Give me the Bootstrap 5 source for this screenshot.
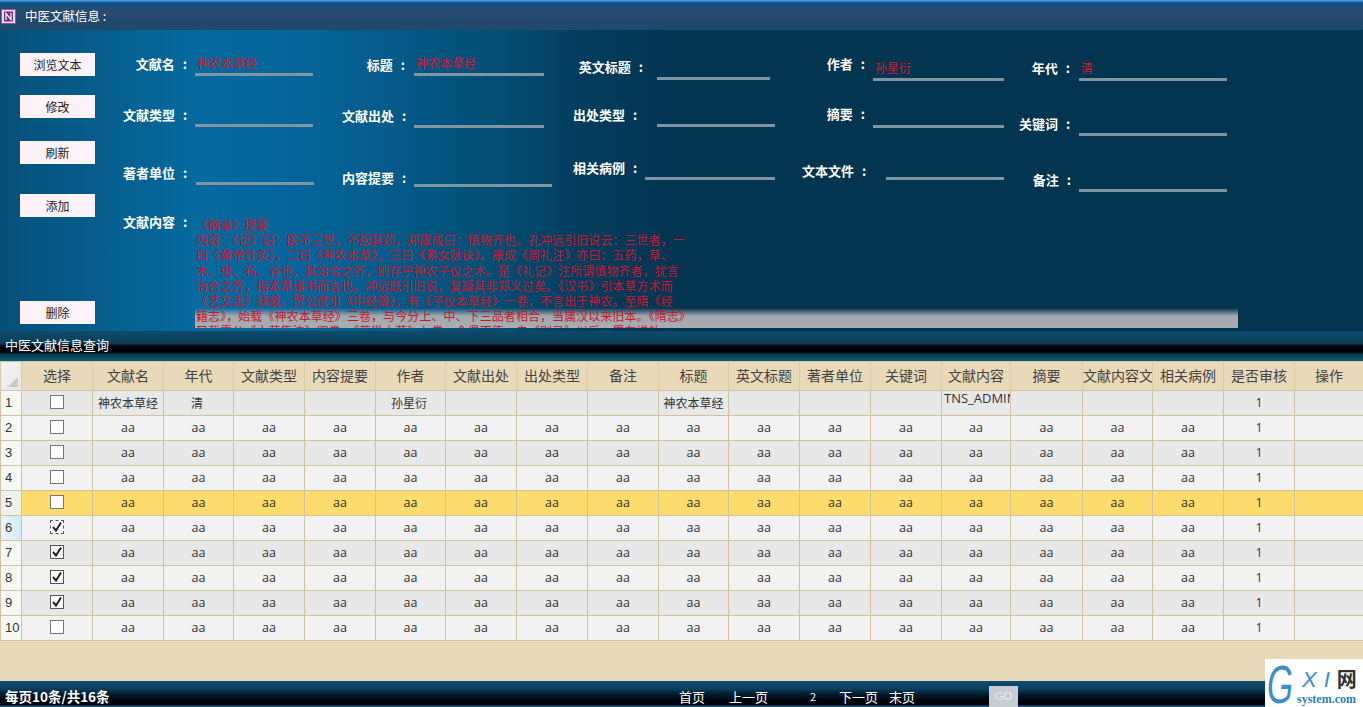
<!DOCTYPE html>
<html lang="zh">
<head>
<meta charset="utf-8">
<title>中医文献信息</title>
<link href="https://cdn.jsdelivr.net/npm/bootstrap@5.3.0/dist/css/bootstrap.min.css" rel="stylesheet">
<style>
html,body{height:707px;overflow:hidden}
body{font-family:"Noto Sans CJK SC","Liberation Sans",sans-serif;font-size:12px;background:#e8dab8;position:relative}
.page{width:1363px;height:707px}
.title-bar{height:30px;padding-top:3px;background:linear-gradient(180deg,#4a9ad8 0,#4a9ad8 1px,#0b5fa5 2px,#14507c 4px,#2a4a70 12px,#21486c 22px,#1f4a6c 30px);color:#fff;font-size:12.5px}
.app-ico{width:15px;height:15px;margin:-1px 9px 0 1px;flex:none}
.form-area{height:301px;overflow:hidden;background:linear-gradient(90deg,#07507a 0,#056a9f 200px,#05659a 300px,#045078 480px,#033c5c 590px,#033450 680px,#033450 100%)}
.btn-col{width:103px;margin-left:20px;padding-top:23px;flex:none}
.act-btn{display:block;width:75px;height:23px;padding:0;border:0;border-radius:0;background:#fdf2f7;color:#222;font-size:12px;line-height:23px}
.mt-a{margin-top:19px}.mt-b{margin-top:23px}.mt-c{margin-top:30px}.mt-d{margin-top:84px}
.fld-col{flex:none;padding-top:20px}
.c1{width:219px}.c2{width:231px}.c3{width:229px}.c4{width:217px}.c5{width:120px}
.fld{display:flex;height:var(--h)}
.fl{flex:none;width:var(--lw);padding-top:var(--lt);line-height:18px;height:27px;text-align:right;white-space:nowrap;color:#fff;font-weight:700;font-size:13px;word-spacing:5px}
.fi{flex:none;margin-left:var(--ig);width:var(--iw);height:var(--ih);border-bottom:3px solid #7e95a3;color:#d5182c;display:flex;align-items:flex-end;padding:0 0 3px 2px;line-height:14px;font-size:12px}
.c1 .fl{--lw:64px}.c1 .fi{--ig:8px;--iw:118px}
.c2 .fl{--lw:63px}.c2 .fi{--ig:9px;--iw:130px}
.c4 .fl{--lw:61px}.c4 .fi{--ig:10px;--iw:131px}
.c5 .fl{--lw:49px}.c5 .fi{--ig:11px;--iw:148px}
.r1{--h:50px}.r2{--h:55px}.r2b{--h:60px}
.a1 .fl{--lt:5px}.a1 .fi{--ih:26px}
.a2 .fl{--lt:6px}.a2 .fi{--ih:27px}
.a3 .fl{--lt:9px}.a3 .fi{--ih:30px;--ig:9px}
.a4 .fl{--lt:3px}
.b1 .fl{--lt:6px}.b1 .fi{--ih:26px}
.b2 .fl{--lt:7px}.b2 .fi{--ih:28px}
.b3 .fl{--lt:9px}.b3 .fi{--ih:27px;--iw:138px}
.d1 .fl{--lw:70px;--lt:8px}.d1 .fi{--ig:14px;--iw:113px;--ih:30px}
.d2 .fl{--lw:63px;--lt:6px}.d2 .fi{--ig:21px;--iw:118px;--ih:27px}
.d3 .fl{--lw:63px;--lt:4px}.d3 .fi{--ig:9px;--iw:130px;--ih:25px}
.e1 .fl{--lt:5px;--lw:63px}.e1 .fi{--ih:31px;--ig:8px}
.e2 .fl{--lt:5px;--lw:63px}.e2 .fi{--ih:28px;--ig:8px}
.e3 .fl{--lt:7px}.e3 .fi{--ih:25px;--ig:23px;--iw:118px}
.g1 .fl{--lt:9px;--lw:51px}.g1 .fi{--ih:31px;--ig:9px}
.g2 .fl{--lt:15px}.g2 .fi{--ih:36px}
.g3 .fl{--lt:16px;--lw:52px}.g3 .fi{--ih:37px;--ig:8px}
.memo{flex:none;margin:7px 0 0 8px;width:1043px;height:111px;overflow:hidden;color:#c8182e;font-size:12px;line-height:15.2px;letter-spacing:.07px;white-space:pre;padding-left:1px;background:linear-gradient(180deg,rgba(170,174,178,0) 0,rgba(170,174,178,.95) 8px,#a9adb0 100%) left bottom/100% 20px no-repeat}
.query-bar{height:30px;color:#fff;font-size:13px;line-height:28px;padding-left:5px;background:linear-gradient(180deg,#0d4a6a 0,#0a3e5a 12px,#082f48 13px,#00050e 15px,#000 21px,#0a3a50 23px,#0a5a70 29px,#0a5a70 30px)}
.grid-area{height:320px;background:#e8dab8}
.data-grid{table-layout:fixed;width:1363px;margin:0;--bs-table-border-color:#cfc3a3;--bs-table-bg:transparent;font-size:12.5px;color:#333;font-family:"Open Sans","Noto Sans CJK SC",sans-serif}
.data-grid>:not(caption)>*>*{padding:0;height:25px;line-height:22px;text-align:center;vertical-align:middle;overflow:hidden;white-space:nowrap;border-color:#cfc3a3}
.data-grid thead th{height:29px;padding-bottom:3px;background:#e8dab8;font-weight:400;font-size:14px;color:#444;font-family:"Noto Sans CJK SC",sans-serif;border-color:#e4d6b2 #d8cba8}
.data-grid .corner{background:linear-gradient(135deg,#f4f4f4,#e6e6e6);position:relative}
.corner svg{position:absolute;right:3px;bottom:3px}
.data-grid th.rh{background:#f6f8f2;font-weight:400;text-align:left;padding-left:4px;font-size:13px;color:#333;font-family:"Liberation Sans",sans-serif}
.data-grid tr.sel-row th.rh{background:linear-gradient(90deg,#e9f5fb,#d3ebf8)}
.data-grid tr.alt>td{background:#e8e8e8}
.data-grid tr.pln>td{background:#f2f2f2}
.data-grid tr.hot>td{background:#fddc6e}
.data-grid tr.hot>th.rh{background:#eef2ea}
.data-grid td.tl{text-align:left;padding-left:2px;line-height:14px;vertical-align:top;font-size:13px}
.cjk{font-family:"Noto Sans CJK SC",sans-serif;font-size:12px}
.nudge{margin-right:3px}
.chk.form-check-input{width:14px;height:14px;margin:-4px 0 0;border:1px solid #777;border-radius:0;background-color:#fff;display:inline-block;vertical-align:middle}
.chk.form-check-input:checked{background-color:#fff;border-color:#555;background-size:14px;background-image:url("data:image/svg+xml,%3Csvg xmlns='http://www.w3.org/2000/svg' viewBox='0 0 14 14'%3E%3Cpath d='M3 7l3 3.5L11 2.5' fill='none' stroke='%23222' stroke-width='2'/%3E%3C/svg%3E")}
.chk.dot.form-check-input{border-style:dashed}
.pager-bar{height:26px;color:#fff;font-size:13px;position:relative;background:linear-gradient(180deg,#0e4c70 0,#0b3e5e 8px,#052238 12px,#00060e 19px,#000 24px,#1b5a98 25px,#2466a8 26px)}
.page-count{width:679px;padding-left:5px;font-weight:700;font-size:13.5px;line-height:30px}
.pg{line-height:32px}
.pg-a{width:50px}.pg-b{width:81px}.pg-c{width:29px}.pg-d{width:50px}.pg-e{width:100px}
.pg-num{font-size:11px;line-height:30px}
.go-btn{width:29px;height:21px;margin-top:5px;padding:0;border:0;border-radius:0;background:#c6ced4;color:#e8ecef;font-size:11px;line-height:21px;font-family:"Liberation Sans",sans-serif}
.logo-box{position:absolute;right:0;bottom:0;width:98px;height:48px;background:#fff;display:flex}
.logo-g{flex:none;margin:-1px -12px 0 2px;height:48px;font:italic 400 54px/52px "Liberation Sans",sans-serif;color:#3a8fc9;transform:scaleX(.62);transform-origin:left center}
.logo-txt{padding-top:8px}
.logo-row{padding-left:5px;height:26px}
.logo-x{font:italic 400 22px/26px "Liberation Sans",sans-serif;color:#3a8fc9;letter-spacing:7px}
.logo-w{font:700 20px/24px "Noto Sans CJK SC",sans-serif;color:#333}
.logo-s{font:700 12px/13px "Liberation Serif",serif;color:#2c7fb8;white-space:nowrap}
</style>
</head>
<body>
<div class="page d-flex flex-column">
  <div class="title-bar d-flex align-items-center">
    <svg class="app-ico" viewBox="0 0 15 15"><rect x=".5" y=".5" width="14" height="14" fill="#f3d8ef" stroke="#9a4fa0"/><rect x="3" y="2.5" width="9" height="10" fill="#7a2a88"/><path d="M5 11V4.5l5 6V4" fill="none" stroke="#fff" stroke-width="1.2"/></svg>
    <span>中医文献信息 :</span>
  </div>

  <div class="form-area d-flex">
    <div class="btn-col">
      <button class="btn act-btn">浏览文本</button>
      <button class="btn act-btn mt-a">修改</button>
      <button class="btn act-btn mt-b">刷新</button>
      <button class="btn act-btn mt-c">添加</button>
      <button class="btn act-btn mt-d">删除</button>
    </div>
    <div class="fld-col c1">
      <div class="fld r1 a1"><label class="fl">文献名 :</label><div class="fi">神农本草经</div></div>
      <div class="fld r2 a2"><label class="fl">文献类型 :</label><div class="fi"></div></div>
      <div class="fld r2 a3"><label class="fl">著者单位 :</label><div class="fi"></div></div>
      <div class="fld a4"><label class="fl">文献内容 :</label><div class="memo">《摘录》提要
内容：《记》曰：医不三世，不服其药。郑康成曰：慎物齐也。孔冲远引旧说云：三世者，一
曰《黄帝针灸》，二曰《神农本草》，三曰《素女脉诀》。康成《周礼注》亦曰：五药，草、
木、虫、石、谷也。其治合之齐，则存乎神农子仪之术。是《礼记》注所谓慎物齐者，犹言
治合之齐，指本草诸书而言也。冲远既引旧说，复疑其非郑义过矣。《汉书》引本草方术而
《艺文志》缺载。贾公彦引《中经簿》，有《子仪本草经》一卷，不言出于神农。至隋《经
籍志》，始载《神农本草经》三卷，与今分上、中、下三品者相合，当属汉以来旧本。《隋志》
又载雷公《本草集注》四卷，《蔡邕本草》七卷，今俱不传。自《别录》以后，累有增补</div></div>
    </div>
    <div class="fld-col c2">
      <div class="fld r1 b1"><label class="fl">标题 :</label><div class="fi">神农本草经</div></div>
      <div class="fld r2b b2"><label class="fl">文献出处 :</label><div class="fi"></div></div>
      <div class="fld b3"><label class="fl">内容提要 :</label><div class="fi"></div></div>
    </div>
    <div class="fld-col c3">
      <div class="fld r1 d1"><label class="fl">英文标题 :</label><div class="fi"></div></div>
      <div class="fld r2 d2"><label class="fl">出处类型 :</label><div class="fi"></div></div>
      <div class="fld d3"><label class="fl">相关病例 :</label><div class="fi"></div></div>
    </div>
    <div class="fld-col c4">
      <div class="fld r1 e1"><label class="fl">作者 :</label><div class="fi">孙星衍</div></div>
      <div class="fld r2 e2"><label class="fl">摘要 :</label><div class="fi"></div></div>
      <div class="fld e3"><label class="fl">文本文件 :</label><div class="fi"></div></div>
    </div>
    <div class="fld-col c5">
      <div class="fld r1 g1"><label class="fl">年代 :</label><div class="fi">清</div></div>
      <div class="fld r2 g2"><label class="fl">关键词 :</label><div class="fi"></div></div>
      <div class="fld g3"><label class="fl">备注 :</label><div class="fi"></div></div>
    </div>
  </div>

  <div class="query-bar">中医文献信息查询</div>

  <div class="grid-area">
    <table class="table table-bordered data-grid">
      <colgroup id="cols"></colgroup>
      <thead><tr id="head"></tr></thead>
      <tbody id="rows"></tbody>
    </table>
  </div>

  <div class="pager-bar d-flex">
    <div class="page-count">每页10条/共16条</div>
    <span class="pg pg-a">首页</span>
    <span class="pg pg-b">上一页</span>
    <span class="pg-num pg-c">2</span>
    <span class="pg pg-d">下一页</span>
    <span class="pg pg-e">末页</span>
    <button class="btn go-btn">GO</button>
  </div>
</div>

<div class="logo-box">
  <div class="logo-g">G</div>
  <div class="logo-txt d-flex flex-column">
    <div class="logo-row d-flex"><span class="logo-x">XI</span><span class="logo-w">网</span></div>
    <div class="logo-s">system.com</div>
  </div>
</div>

<script>
var edges=[0,21,92,163,233,304,375,445,516,587,658,728,799,870,941,1010,1082,1152,1223,1294,1363];
var heads=["选择","文献名","年代","文献类型","内容提要","作者","文献出处","出处类型","备注","标题","英文标题","著者单位","关键词","文献内容","摘要","文献内容文","相关病例","是否审核","操作"];
var colsHtml="";
for(var i=1;i<edges.length;i++){colsHtml+='<col width="'+(edges[i]-edges[i-1])+'">';}
document.getElementById("cols").innerHTML=colsHtml;
document.getElementById("head").innerHTML='<th class="corner"><svg width="10" height="10"><path d="M10 0v10H0z" fill="#c9c9c9"/></svg></th>'+heads.map(function(h){return "<th>"+h+"</th>"}).join("");
var checked={6:1,7:1,8:1,9:1};
var first={1:"神农本草经",2:"清",5:"孙星衍",9:"神农本草经"};
var html="";
for(var r=1;r<=10;r++){
  var cls=r==5?"hot":(r%2==0?"pln":"alt");
  if(r==6)cls+=" sel-row";
  html+='<tr class="'+cls+'"><th class="rh">'+r+'</th>';
  html+='<td><input type="checkbox" class="form-check-input chk'+(r==6?' dot':'')+'"'+(checked[r]?' checked':'')+'></td>';
  for(var c=1;c<heads.length;c++){
    var h=heads[c],t="";
    if(r==1){
      if(first[c]) t='<span class="cjk'+((c==2||c==5)?' nudge':'')+'">'+first[c]+'</span>';
      if(h=="文献内容"){html+='<td class="tl">TNS_ADMIN</td>';continue;}
    } else t="aa";
    if(h=="是否审核")t="1";
    if(h=="操作")t="";
    html+="<td>"+t+"</td>";
  }
  html+="</tr>";
}
document.getElementById("rows").innerHTML=html;
</script>
<script src="https://cdn.jsdelivr.net/npm/bootstrap@5.3.0/dist/js/bootstrap.bundle.min.js"></script>
</body>
</html>
